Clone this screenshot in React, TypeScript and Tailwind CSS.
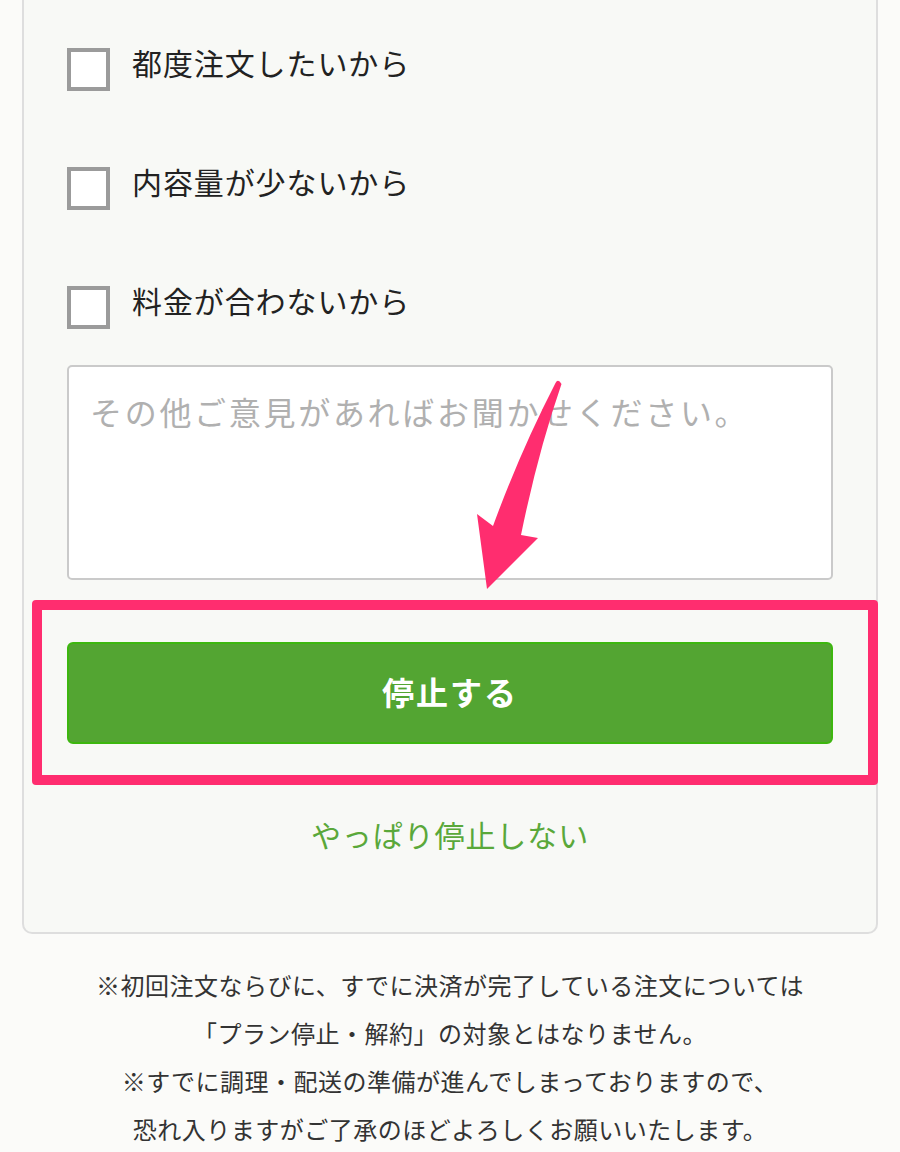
const font = { fontFamily: '"Noto Sans CJK JP", "Noto Sans", sans-serif' }

const reasons = ['都度注文したいから', '内容量が少ないから', '料金が合わないから']

function Checkbox({ label }: { label: string }) {
  return (
    <label className="flex h-[43px] items-center gap-[22px]">
      <span className="block h-[43px] w-[43px] shrink-0 border-[4px] border-[#9b9b9b] bg-white" />
      <span className="pb-4 text-[30px] leading-none tracking-[0.9px] text-[#222]">{label}</span>
    </label>
  )
}

function Arrow() {
  return (
    <svg
      className="pointer-events-none absolute left-0 top-0"
      width="900"
      height="1152"
      viewBox="0 0 900 1152"
    >
      <path
        d="M555.5 383 Q558 378 561.5 384 Q538 452 521 535 L538 538 L487 589 L477 514 L493 526 Q520 452 555.5 383 Z"
        fill="#ff2d6f"
      />
    </svg>
  )
}

export default function App() {
  return (
    <div className="relative min-h-[1152px] overflow-hidden bg-[#fbfbf9]" style={font}>
      <div className="mx-[22px] rounded-b-[10px] border-2 border-t-0 border-[#dedede] bg-[#f8f9f6] pb-[83px] pl-[43px] pr-[43px] pt-[48px]">
        <div className="flex flex-col gap-[76px]">
          {reasons.map(r => (
            <Checkbox key={r} label={r} />
          ))}
        </div>

        <div className="mt-[36px] h-[215px] rounded-[5px] border-2 border-[#cacaca] bg-white px-[21px] pt-[28px]">
          <p className="text-[32px] leading-none tracking-[2.7px] text-[#b0b0b0]">
            その他ご意見があればお聞かせください。
          </p>
        </div>

        <div className="relative mt-[62px]">
          <button className="flex h-[102px] w-full items-center justify-center rounded-[6px] border-2 border-[#3db70f] bg-[#53a532] pb-1 text-[32px] font-bold tracking-[2px] text-white">
            停止する
          </button>
          <div className="absolute -bottom-[41px] -left-[35px] -right-[45px] -top-[42px] rounded-[4px] border-[10px] border-[#ff2d6f]" />
        </div>

        <p className="mt-[75px] text-center text-[30px] leading-none tracking-[0.9px] text-[#5aa83a]">
          やっぱり停止しない
        </p>
      </div>

      <div className="mt-[27px] text-center text-[24px] leading-[48px] tracking-[0.5px] text-[#333]">
        <p>※初回注文ならびに、すでに決済が完了している注文については</p>
        <p>「プラン停止・解約」の対象とはなりません。</p>
        <p>※すでに調理・配送の準備が進んでしまっておりますので、</p>
        <p>恐れ入りますがご了承のほどよろしくお願いいたします。</p>
      </div>

      <Arrow />
    </div>
  )
}
